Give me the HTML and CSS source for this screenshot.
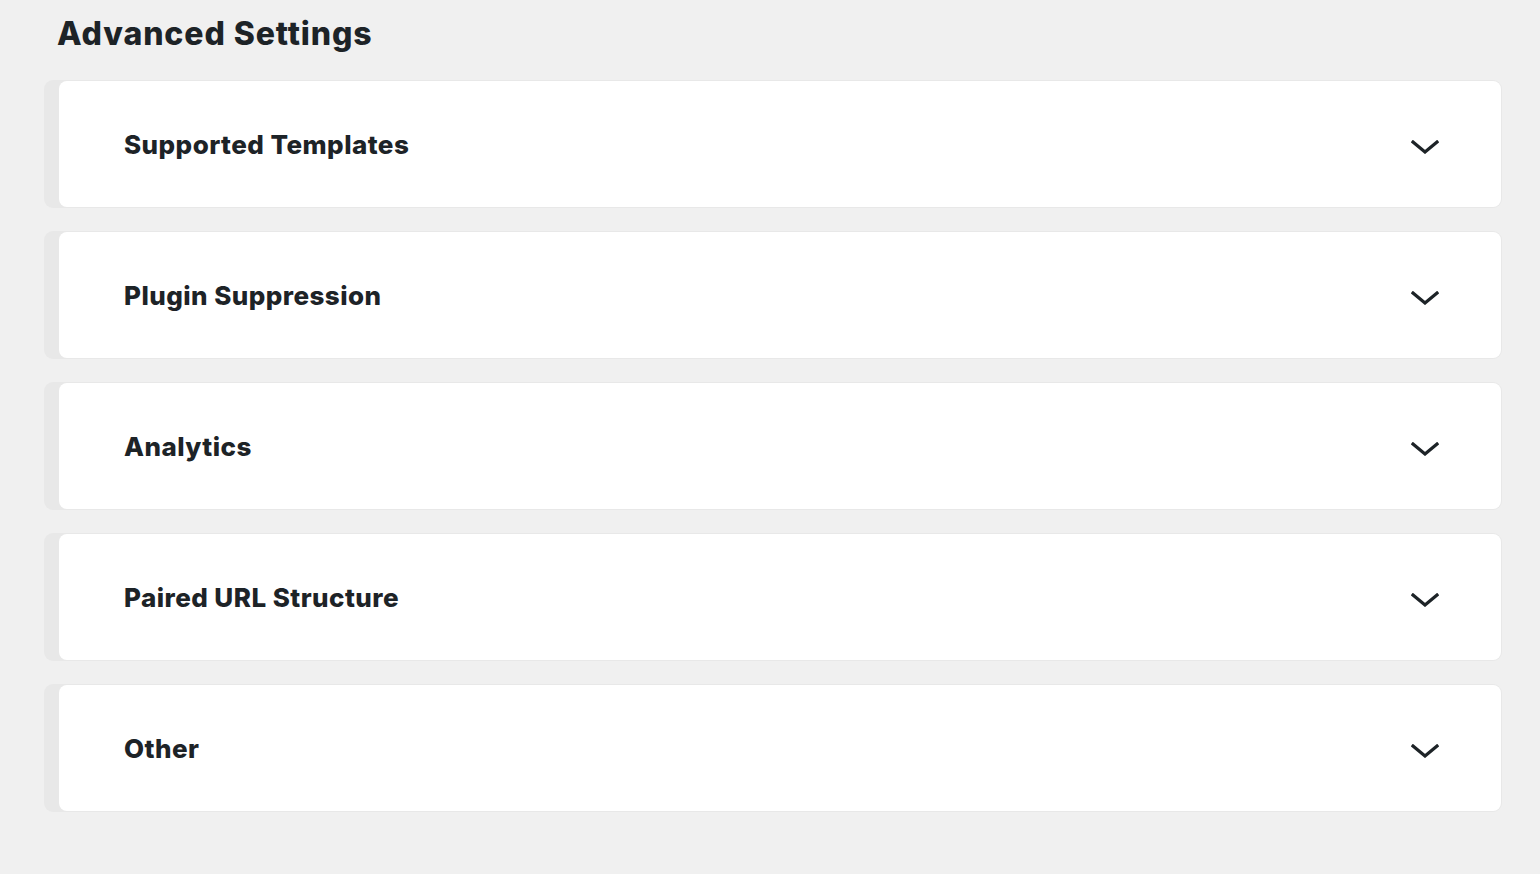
FILE: index.html
```html
<!DOCTYPE html>
<html lang="en">
<head>
<meta charset="utf-8">
<title>Advanced Settings</title>
<link rel="stylesheet" href="styles.css">
</head>
<body>
<main class="page">
  <h1 class="title">Advanced Settings</h1>
  <div class="panels">
    <section class="panel"><div class="panel-inner"><h2 class="panel-title">Supported Templates</h2><svg class="chev" viewBox="0 0 28 14" width="28" height="14"><path d="M2 2 L14 12 L26 2" fill="none" stroke="#1d2327" stroke-width="3.2" stroke-linecap="square"/></svg></div></section>
    <section class="panel"><div class="panel-inner"><h2 class="panel-title">Plugin Suppression</h2><svg class="chev" viewBox="0 0 28 14" width="28" height="14"><path d="M2 2 L14 12 L26 2" fill="none" stroke="#1d2327" stroke-width="3.2" stroke-linecap="square"/></svg></div></section>
    <section class="panel"><div class="panel-inner"><h2 class="panel-title">Analytics</h2><svg class="chev" viewBox="0 0 28 14" width="28" height="14"><path d="M2 2 L14 12 L26 2" fill="none" stroke="#1d2327" stroke-width="3.2" stroke-linecap="square"/></svg></div></section>
    <section class="panel"><div class="panel-inner"><h2 class="panel-title">Paired URL Structure</h2><svg class="chev" viewBox="0 0 28 14" width="28" height="14"><path d="M2 2 L14 12 L26 2" fill="none" stroke="#1d2327" stroke-width="3.2" stroke-linecap="square"/></svg></div></section>
    <section class="panel"><div class="panel-inner"><h2 class="panel-title">Other</h2><svg class="chev" viewBox="0 0 28 14" width="28" height="14"><path d="M2 2 L14 12 L26 2" fill="none" stroke="#1d2327" stroke-width="3.2" stroke-linecap="square"/></svg></div></section>
  </div>
</main>
</body>
</html>
```

FILE: styles.css
```css
html, body {
  margin: 0;
  padding: 0;
  background: #f0f0f0;
}
body {
  font-family: Inter, "Noto Sans", sans-serif;
  color: #1d2327;
  width: 1540px;
  height: 874px;
  overflow: hidden;
}
.page {
  padding: 14px 38px 0 44px;
}
.title {
  margin: 0 0 0 13px;
  font-size: 32px;
  font-weight: 800;
  line-height: 40px;
  letter-spacing: 0.9px;
}
.panels {
  margin-top: 26px;
  display: flex;
  flex-direction: column;
  gap: 23px;
}
.panel {
  background: #e8e8e8;
  border-radius: 9px;
  padding: 1px 1px 1px 15px;
}
.panel-inner {
  background: #fff;
  border-radius: 8px;
  height: 126px;
  display: flex;
  align-items: center;
  justify-content: space-between;
  padding: 0 62px 0 65px;
}
.panel-title {
  margin: 0;
  font-size: 26px;
  font-weight: 800;
  letter-spacing: 0.45px;
}
.chev {
  display: block;
  position: relative;
  top: 3px;
}
```
